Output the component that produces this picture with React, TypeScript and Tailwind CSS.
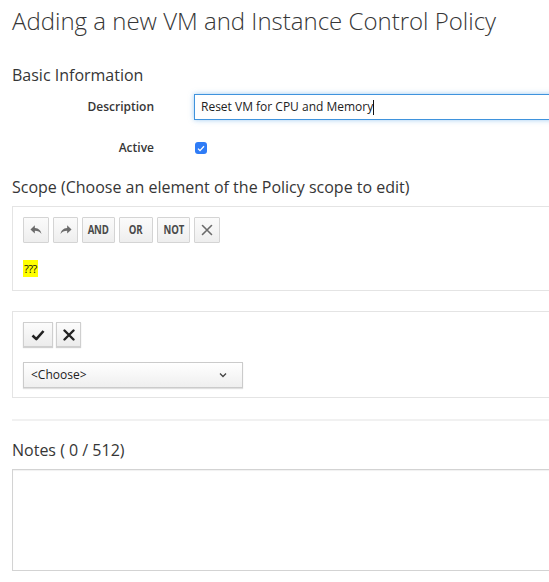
import React from "react";

const ReplyIcon = ({ flip = false }: { flip?: boolean }) => (
  <svg
    width="14"
    height="14"
    viewBox="0 0 24 24"
    className={flip ? "-scale-x-100" : ""}
    fill="#6b6b6b"
  >
    <path d="M10 8.5V4L2.5 11 10 18v-4.6c5.2 0 8.6 1.7 11.5 5.6-1.1-5.6-4.4-10.1-11.5-10.5z" />
  </svg>
);

const XIcon = ({ bold = false }: { bold?: boolean }) => (
  <svg width="12" height="12" viewBox="0 0 12 12">
    <path
      d="M1.5 1.5l9 9M10.5 1.5l-9 9"
      stroke={bold ? "#222" : "#6b6b6b"}
      strokeWidth={bold ? 2.4 : 1.6}
      strokeLinecap="round"
    />
  </svg>
);

const CheckIcon = () => (
  <svg width="14" height="12" viewBox="0 0 14 12">
    <path
      d="M1.5 6.5l3.8 3.6L12.5 2"
      stroke="#222"
      strokeWidth="2.6"
      fill="none"
      strokeLinejoin="round"
    />
  </svg>
);

const ToolButton = ({ w, children }: { w: string; children: React.ReactNode }) => (
  <div
    className={`${w} h-[26px] flex items-center justify-center border border-[#d4d4d4] bg-linear-to-b from-[#fbfbfb] to-[#eeeeee] rounded-[1px]`}
  >
    {children}
  </div>
);

const OpLabel = ({ text }: { text: string }) => (
  <span className="inline-block scale-x-[0.8] text-[12px] font-bold text-[#4a4a4a] tracking-[-0.2px]">
    {text}
  </span>
);

export default function App() {
  return (
    <div className="w-[549px] h-[582px] overflow-hidden bg-white text-[#363636] font-['Open_Sans',sans-serif]">
      <div className="w-[600px] pl-3">
        <h1 className="pt-[8px] text-[24px] leading-[26px] font-light text-[#363636]">
          Adding a new VM and Instance Control Policy
        </h1>

        <h2 className="mt-[30px] text-[16px] leading-[22px]">Basic Information</h2>

        {/* Description */}
        <div className="mt-[8px] flex items-center h-[26px]">
          <div className="w-[142px] text-right text-[12px] font-semibold">Description</div>
          <div className="ml-[40px] flex-1 h-[26px] border border-[#3f93dd] shadow-[0_0_5px_rgba(80,160,230,0.55)] px-[6px] flex items-center text-[12px] text-[#222]">
            Reset VM for CPU and Memory
            <span className="inline-block w-px h-[15px] bg-[#111]" />
          </div>
        </div>

        {/* Active */}
        <div className="mt-[18px] flex items-center h-[20px]">
          <div className="w-[142px] text-right text-[12px] font-semibold">Active</div>
          <div className="ml-[41px] w-[12px] h-[12px] rounded-[3px] bg-[#2f7cf6] flex items-center justify-center">
            <svg width="8" height="7" viewBox="0 0 8 7">
              <path d="M1 3.6l2 2L7 1.2" stroke="#fff" strokeWidth="1.3" fill="none" />
            </svg>
          </div>
        </div>

        <h2 className="mt-[18px] text-[16px] leading-[22px]">
          Scope (Choose an element of the Policy scope to edit)
        </h2>

        {/* Scope expression */}
        <div className="mt-[8px] border border-[#e4e4e4] pt-[10px] pl-[10px] pb-[13px]">
          <div className="flex gap-[4px]">
            <ToolButton w="w-[26px]">
              <ReplyIcon />
            </ToolButton>
            <ToolButton w="w-[25px]">
              <ReplyIcon flip />
            </ToolButton>
            <ToolButton w="w-[33px]">
              <OpLabel text="AND" />
            </ToolButton>
            <ToolButton w="w-[34px]">
              <OpLabel text="OR" />
            </ToolButton>
            <ToolButton w="w-[33px]">
              <OpLabel text="NOT" />
            </ToolButton>
            <ToolButton w="w-[26px]">
              <XIcon />
            </ToolButton>
          </div>
          <div className="mt-[17px] h-[17px] flex">
            <span className="bg-[#ffff00] px-[1px] text-[11px] leading-[17px] text-[#111] tracking-[-0.5px]">
              ???
            </span>
          </div>
        </div>

        {/* Element editor */}
        <div className="mt-[20px] border border-[#e4e4e4] pt-[10px] pl-[10px] pb-[9px]">
          <div className="flex gap-[3px]">
            <div className="w-[30px] h-[25px] flex items-center justify-center border border-[#cfcfcf] bg-linear-to-b from-[#fcfcfc] to-[#ececec] shadow-[0_1px_1px_rgba(0,0,0,0.18)]">
              <CheckIcon />
            </div>
            <div className="w-[25px] h-[25px] flex items-center justify-center border border-[#cfcfcf] bg-linear-to-b from-[#fcfcfc] to-[#ececec] shadow-[0_1px_1px_rgba(0,0,0,0.18)]">
              <XIcon bold />
            </div>
          </div>
          <div className="mt-[15px] w-[220px] h-[26px] border border-[#cbcbcb] bg-linear-to-b from-[#ffffff] to-[#efefef] shadow-[0_1px_1px_rgba(0,0,0,0.12)] flex items-center justify-between pl-[7px] pr-[15px] text-[12px] text-[#222]">
            <span>&lt;Choose&gt;</span>
            <svg width="8" height="6" viewBox="0 0 8 6">
              <path d="M1 1.5l3 3 3-3" stroke="#444" strokeWidth="1.3" fill="none" />
            </svg>
          </div>
        </div>

        <div className="mt-[21px] h-[2px] bg-[#f1f1f1]" />

        <h2 className="mt-[18px] text-[16px] leading-[22px]">Notes ( 0 / 512)</h2>
        <div className="mt-[8px] h-[102px] border border-[#d3d3d3] shadow-[inset_0_1px_1px_rgba(0,0,0,0.06)]" />
      </div>
    </div>
  );
}
